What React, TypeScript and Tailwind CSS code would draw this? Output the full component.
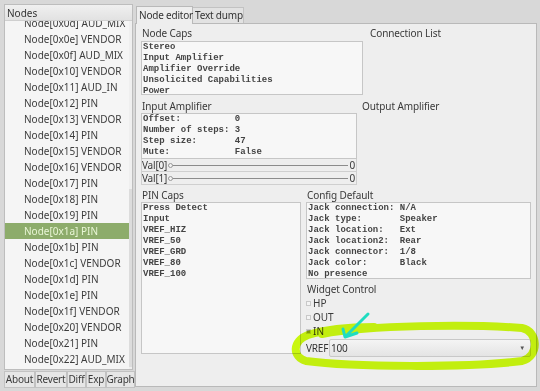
import React from "react";

const NODES = [
  "Node[0x0d] AUD_MIX",
  "Node[0x0e] VENDOR",
  "Node[0x0f] AUD_MIX",
  "Node[0x10] VENDOR",
  "Node[0x11] AUD_IN",
  "Node[0x12] PIN",
  "Node[0x13] VENDOR",
  "Node[0x14] PIN",
  "Node[0x15] VENDOR",
  "Node[0x16] VENDOR",
  "Node[0x17] PIN",
  "Node[0x18] PIN",
  "Node[0x19] PIN",
  "Node[0x1a] PIN",
  "Node[0x1b] PIN",
  "Node[0x1c] VENDOR",
  "Node[0x1d] PIN",
  "Node[0x1e] PIN",
  "Node[0x1f] VENDOR",
  "Node[0x20] VENDOR",
  "Node[0x21] PIN",
  "Node[0x22] AUD_MIX",
];

const SELECTED = "Node[0x1a] PIN";

const ui = { fontFamily: '"Noto Sans", "Open Sans", sans-serif' };
const mono = { fontFamily: '"Liberation Mono", "DejaVu Sans Mono", monospace' };

function Label({ children }: { children: React.ReactNode }) {
  return (
    <div className="h-[14px] leading-[14px] text-[10px] tracking-[-0.1px] text-[#3a3a3a] pl-[1px] whitespace-nowrap">
      {children}
    </div>
  );
}

function MonoBox({ lines, className }: { lines: string[]; className: string }) {
  return (
    <div
      className={`border border-[#c6c6c6] bg-[#f7f7f7] px-[1px] text-[9px] leading-[11px] font-bold text-[#444] whitespace-pre overflow-hidden ${className}`}
      style={mono}
    >
      {lines.map((l, i) => (
        <div key={i}>{l}</div>
      ))}
    </div>
  );
}

function Slider({ label }: { label: string }) {
  return (
    <div className="h-[13px] flex items-center border border-t-0 border-[#cfcfcf] text-[10px] tracking-[-0.2px] text-[#3a3a3a]">
      <span className="leading-[13px]">{label}</span>
      <div className="flex-1 relative h-[5px] flex items-center mx-[1px]">
        <div className="w-full h-[1px] bg-[#8c8c8c]" />
        <div className="absolute left-0 w-[5px] h-[5px] rounded-full border border-[#9a9a9a] bg-[#f2f2f2]" />
      </div>
      <span className="leading-[13px] pr-[1px]">0</span>
    </div>
  );
}

function Radio({ label, checked }: { label: string; checked?: boolean }) {
  return (
    <div className="h-[14px] flex items-center gap-[2px] text-[10px] text-[#3a3a3a]">
      <div className="w-[5px] h-[5px] border border-[#c9c9c9] bg-[#f4f4f4] flex items-center justify-center">
        {checked && <div className="w-[3px] h-[3px] bg-[#9a9a9a]" />}
      </div>
      <span className="leading-[14px]">{label}</span>
    </div>
  );
}

export default function App() {
  return (
    <div className="relative w-[540px] h-[391px] bg-[#d8d8d8] overflow-hidden flex" style={ui}>
      {/* left: nodes tree */}
      <div className="w-[135px] flex flex-col pl-[4px] pt-[4px] pr-[2px] pb-[3px]">
        <div className="flex-1 border border-[#bdbdbd] bg-[#f5f5f5] flex flex-col overflow-hidden">
          <div className="h-[16px] leading-[16px] text-[10px] text-[#333] pl-[2px] bg-gradient-to-b from-[#f0f0f0] to-[#e2e2e2] border-b border-[#cfcfcf]">
            Nodes
          </div>
          <div className="flex-1 flex overflow-hidden">
            <div className="flex-1 -mt-[6px]">
              {NODES.map(n => (
                <div
                  key={n}
                  className={`h-[16px] leading-[16px] pl-[19px] text-[10px] whitespace-nowrap ${n === SELECTED ? "bg-[#8dac6b] text-[#e9f6d6]" : "text-[#3c3c3c]"}`}
                >
                  {n}
                </div>
              ))}
            </div>
            <div className="w-[3px] flex flex-col bg-[#efefef]">
              <div className="h-[168px]" />
              <div className="h-[178px] bg-[#dcdcdc]" />
            </div>
          </div>
        </div>
        <div className="flex h-[17px] mt-[1px] text-[10px] tracking-[-0.2px] text-[#3a3a3a]">
          {[
            ["About", "w-[31px]"],
            ["Revert", "w-[32px]"],
            ["Diff", "w-[19px]"],
            ["Exp", "w-[20px]"],
            ["Graph", "w-[29px]"],
          ].map(([t, w]) => (
            <div
              key={t}
              className={`${w} shrink-0 border border-[#c2c2c2] bg-[#e6e6e6] flex items-center justify-center leading-[15px] whitespace-nowrap`}
            >
              {t}
            </div>
          ))}
        </div>
      </div>

      {/* right: tab widget */}
      <div className="flex-1 flex flex-col pt-[5px] pr-[3px] pb-[4px]">
        <div className="flex items-end h-[18px] pl-[1px]">
          <div className="w-[57px] h-[18px] border border-b-0 border-[#b9b9b9] bg-[#eeeeee] text-[10px] tracking-[-0.2px] text-[#333] leading-[17px] pl-[2px] relative top-[1px] whitespace-nowrap">
            Node editor
          </div>
          <div className="w-[51px] h-[16px] border border-b-0 border-l-0 border-[#c2c2c2] bg-[#e2e2e2] text-[10px] tracking-[-0.2px] text-[#333] leading-[15px] pl-[2px] whitespace-nowrap">
            Text dump
          </div>
        </div>
        <div className="flex-1 border border-[#b9b9b9] bg-[#eeeeee] pl-[5px] pt-[2px]">
          {/* row 1 */}
          <div className="flex">
            <div className="w-[222px]">
              <Label>Node Caps</Label>
              <MonoBox
                className="h-[54px] mt-[1px]"
                lines={["Stereo", "Input Amplifier", "Amplifier Override", "Unsolicited Capabilities", "Power"]}
              />
            </div>
            <div className="ml-[6px]">
              <Label>Connection List</Label>
            </div>
          </div>
          {/* row 2 */}
          <div className="flex mt-[4px]">
            <div className="w-[216px]">
              <Label>Input Amplifier</Label>
              <MonoBox
                className="h-[46px]"
                lines={["Offset:          0", "Number of steps: 3", "Step size:       47", "Mute:            False"]}
              />
              <Slider label="Val[0]" />
              <Slider label="Val[1]" />
            </div>
            <div className="ml-[4px]">
              <Label>Output Amplifier</Label>
            </div>
          </div>
          {/* row 3 */}
          <div className="flex mt-[3px]">
            <div className="w-[160px]">
              <Label>PIN Caps</Label>
              <MonoBox
                className="h-[152px]"
                lines={["Press Detect", "Input", "VREF_HIZ", "VREF_50", "VREF_GRD", "VREF_80", "VREF_100"]}
              />
            </div>
            <div className="w-[225px] ml-[5px]">
              <Label>Config Default</Label>
              <MonoBox
                className="h-[77px]"
                lines={[
                  "Jack connection: N/A",
                  "Jack type:       Speaker",
                  "Jack location:   Ext",
                  "Jack location2:  Rear",
                  "Jack connector:  1/8",
                  "Jack color:      Black",
                  "No presence",
                ]}
              />
              <div className="mt-[3px]">
                <Label>Widget Control</Label>
              </div>
              <Radio label="HP" />
              <Radio label="OUT" />
              <Radio label="IN" checked />
              <div className="flex items-center h-[20px] text-[10px] tracking-[-0.2px] text-[#333]">
                <span className="w-[23px] shrink-0">VREF</span>
                <div className="flex-1 h-[18px] border border-[#c8c8c8] rounded-[2px] bg-gradient-to-b from-[#f4f4f4] to-[#e4e4e4] flex items-center justify-between pl-[1px] pr-[5px]">
                  <span>100</span>
                  <span className="text-[6px] text-[#555]">▼</span>
                </div>
              </div>
            </div>
          </div>
        </div>
      </div>

      {/* hand-drawn annotation */}
      <svg className="absolute inset-0 pointer-events-none mix-blend-multiply" width="540" height="391" viewBox="0 0 540 391">
        <path
          d="M322 334 C370 325 470 324 522 328 C538 331 540 356 522 361 C470 368 350 367 306 361 C292 357 292 341 308 335 C330 328 352 327 374 327"
          fill="none"
          stroke="#d0ff10"
          strokeWidth="8"
          strokeLinecap="round"
        />
      </svg>
      <svg className="absolute inset-0 pointer-events-none" width="540" height="391" viewBox="0 0 540 391">
        <path d="M368 314 L346 336 M343 329 L345 337 L357 333" fill="none" stroke="#1fdcc0" strokeWidth="3" strokeLinecap="round" strokeLinejoin="round" />
      </svg>
    </div>
  );
}
